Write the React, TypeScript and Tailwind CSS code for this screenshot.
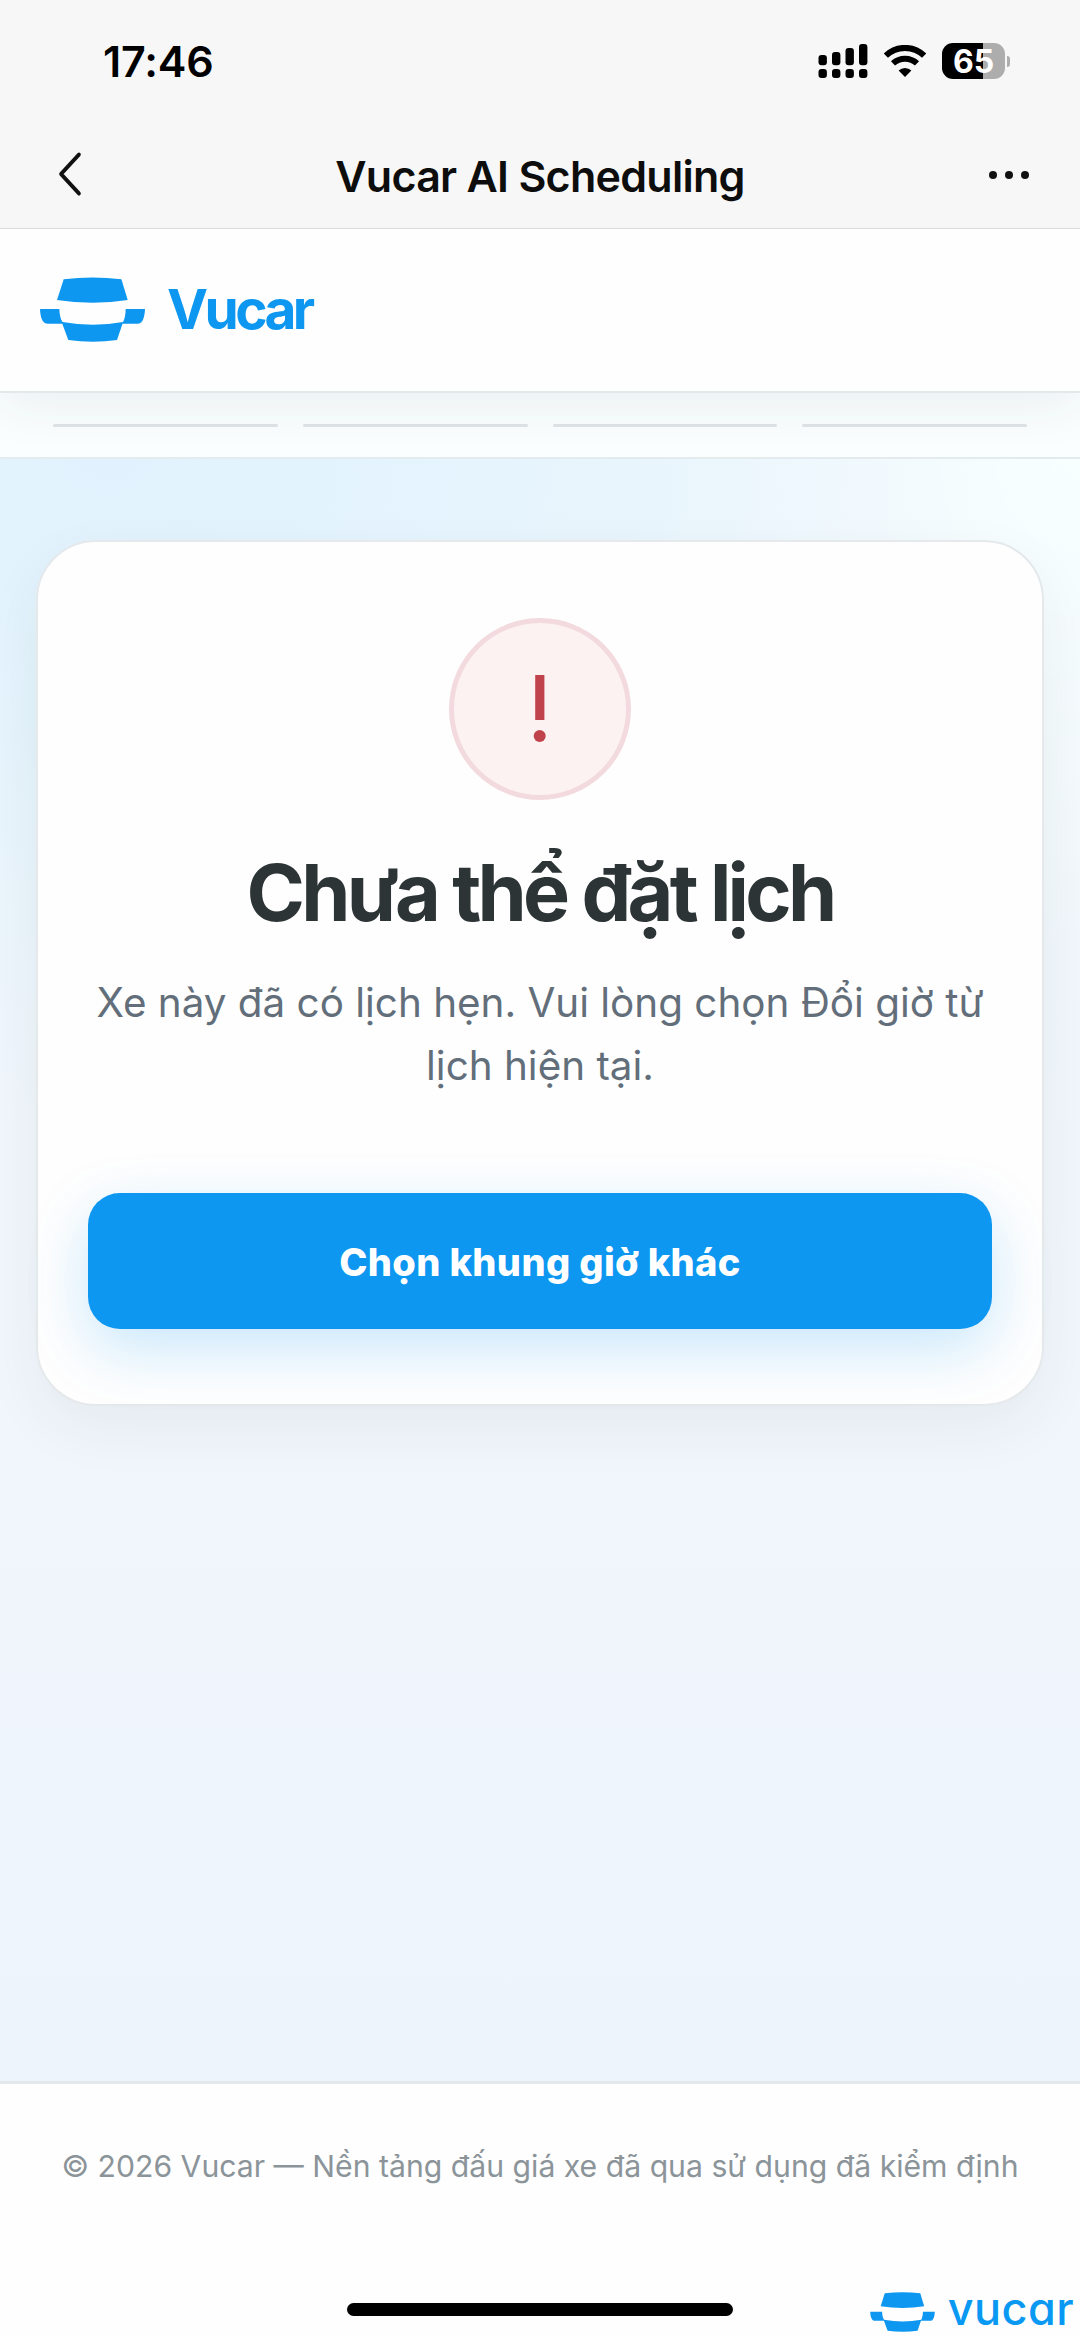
import { ChevronLeft } from "lucide-react";

const steps = [1, 2, 3, 4];

function VucarMark({ className }: { className?: string }) {
  return (
    <svg viewBox="0 0 105 65" fill="#0d97f0" className={className} aria-hidden="true">
      <path d="M23.7 2.2Q52.5 -1.4 81.4 2.2L87.7 23Q52.5 28.6 17 23Z" />
      <path d="M0 32H19.3C19.6 38 20.6 42.5 22.5 45Q53 50.5 83 45C84.6 42.5 85.5 38 85.7 32H105C104.6 41 102.5 46.7 97.5 46.7H82.5L77 62.9Q53 66.4 28.3 62.9L22.3 46.7H8C2.5 46.7 0.4 41 0 32Z" />
    </svg>
  );
}

function SignalIcon() {
  return (
    <svg viewBox="0 0 50 36" className="h-9 w-[50px]" aria-hidden="true">
      <rect x="0.5" y="12" width="8.4" height="10.2" rx="3" />
      <rect x="14" y="9" width="8.4" height="13.2" rx="3" />
      <rect x="27.5" y="5" width="8.4" height="17.2" rx="3" />
      <rect x="41" y="1" width="8.4" height="21.2" rx="3" />
      <rect x="0.5" y="26" width="8.4" height="9" rx="3" />
      <rect x="14" y="26" width="8.4" height="9" rx="3" />
      <rect x="27.5" y="26" width="8.4" height="9" rx="3" />
      <rect x="41" y="26" width="8.4" height="9" rx="3" />
    </svg>
  );
}

function WifiIcon() {
  return (
    <svg viewBox="0 0 42 32" className="ml-4 h-8 w-[42px]" aria-hidden="true">
      <path d="M1.9 10.6A27.5 27.5 0 0 1 40.1 10.6" fill="none" stroke="#000" strokeWidth="6" />
      <path d="M9 18.4A17.6 17.6 0 0 1 33 18.4" fill="none" stroke="#000" strokeWidth="6" />
      <path d="M21 32L14.6 25.6A9.4 9.4 0 0 1 27.4 25.6Z" />
    </svg>
  );
}

function Battery() {
  return (
    <div className="ml-4 flex items-center gap-[2px]">
      <div className="flex h-9 w-[63px] items-center justify-center rounded-[11px] bg-[linear-gradient(90deg,#000_65%,#adadad_65%)] pt-px">
        <span className="text-[32px] leading-none font-bold text-white">65</span>
      </div>
      <div className="h-[11px] w-[3px] rounded-r-full bg-[#adadad]" />
    </div>
  );
}

export default function App() {
  return (
    <div className="flex h-[2336px] w-[1080px] flex-col overflow-hidden bg-[#fdfefe] font-[Inter,'Noto_Sans',sans-serif] text-black">
      <div className="relative z-10 flex h-[122px] items-center justify-between bg-[#f7f7f7] pr-[70px] pl-[103px]">
        <span className="text-[43px] leading-none font-semibold tracking-[-0.003em]">17:46</span>
        <div className="flex items-center">
          <SignalIcon />
          <WifiIcon />
          <Battery />
        </div>
      </div>

      <nav className="relative z-10 flex h-[107px] items-center justify-between border-b border-[#dcdddd] bg-[#f7f7f7] pt-[3px] pr-[51px] pl-[34px]">
        <div className="w-[87px]">
          <ChevronLeft className="-mt-[5px] h-[78px] w-[72px]" strokeWidth={1.2} color="#111" preserveAspectRatio="none" />
        </div>
        <h1 className="text-[43px] leading-none font-semibold tracking-[-0.017em] whitespace-nowrap text-[#0d0d0d]">
          Vucar AI Scheduling
        </h1>
        <div className="flex w-[70px] items-center justify-end gap-2 pb-[4px]">
          <span className="size-2 rounded-full bg-[#111]" />
          <span className="size-2 rounded-full bg-[#111]" />
          <span className="size-2 rounded-full bg-[#111]" />
        </div>
      </nav>

      <header className="relative flex h-[164px] items-center gap-[22px] border-b-2 border-[#e3e8ea] bg-[#fefefe] pb-[2px] pl-10 shadow-[0_10px_50px_rgba(40,50,55,0.08)]">
        <VucarMark className="h-[65px] w-[105px]" />
        <span className="text-[55px] leading-none font-bold tracking-[-0.065em] text-[#0d97f0]">Vucar</span>
      </header>

      <div className="flex h-[66px] items-center gap-[25px] border-b-2 border-[#e3ebee] bg-[#fafefe] px-[53px]">
        {steps.map((s) => (
          <div key={s} className="h-[3px] flex-1 rounded-full bg-[#dfe4e6]" />
        ))}
      </div>

      <main className="flex-1 bg-[radial-gradient(ellipse_900px_650px_at_10%_0%,#e1f2fe_0%,#e5f4fd_40%,rgba(240,246,253,0)_100%),radial-gradient(ellipse_450px_500px_at_100%_0%,#f8ffff_0%,rgba(248,255,255,0)_100%),linear-gradient(180deg,#f1f7fc_0%,#f1f6fc_60%,#edf4fb_100%)] px-9 pt-[81px]">
        <section className="flex h-[866px] flex-col items-center rounded-[60px] border-2 border-[#e5e9eb] bg-[#fefefe] px-[50px] pt-[76px] text-center shadow-[0_22px_60px_rgba(40,50,40,0.06)]">
          <div className="flex size-[182px] items-center justify-center rounded-full border-[5px] border-[#f3dade] bg-[#fcf2f2]">
            <svg viewBox="0 0 16 70" className="h-[70px] w-4" fill="#c0434b" aria-hidden="true">
              <rect x="3.2" y="1" width="9.2" height="45" />
              <circle cx="7.7" cy="62" r="6" />
            </svg>
          </div>
          <h2 className="mt-[44px] text-[79px] leading-[96px] font-bold tracking-[-0.047em] whitespace-nowrap text-[#2d3436]">
            Chưa thể đặt lịch
          </h2>
          <p className="mt-[31px] w-[900px] text-[40.4px] leading-[63px] text-[#636e7b]">
            Xe này đã có lịch hẹn. Vui lòng chọn Đổi giờ từ
            <br />
            lịch hiện tại.
          </p>
          <button
            type="button"
            className="mt-[96px] h-[136px] w-full shrink-0 rounded-[32px] bg-[#0d97f0] pt-[2px] text-[38px] font-extrabold tracking-[0.01em] text-white shadow-[0_20px_60px_rgba(13,151,240,0.22)]"
          >
            Chọn khung giờ khác
          </button>
        </section>
      </main>

      <footer className="relative flex h-[255px] flex-col items-center border-t-[3px] border-[#e3e9eb] bg-[#fefefe] pt-[62px]">
        <p className="text-[30.2px] leading-[40px] whitespace-nowrap text-[#8b9499]">
          © 2026 Vucar — Nền tảng đấu giá xe đã qua sử dụng đã kiểm định
        </p>
        <div className="mt-[117px] h-[13px] w-[386px] rounded-full bg-black" />
        <div className="absolute right-[6px] bottom-[1px] flex items-center gap-[13px]">
          <VucarMark className="h-10 w-[65px]" />
          <span className="pb-[6px] text-[45px] leading-10 font-medium tracking-[0.01em] text-[#0a99f2] [font-feature-settings:'cv11']">
            vucar
          </span>
        </div>
      </footer>
    </div>
  );
}
